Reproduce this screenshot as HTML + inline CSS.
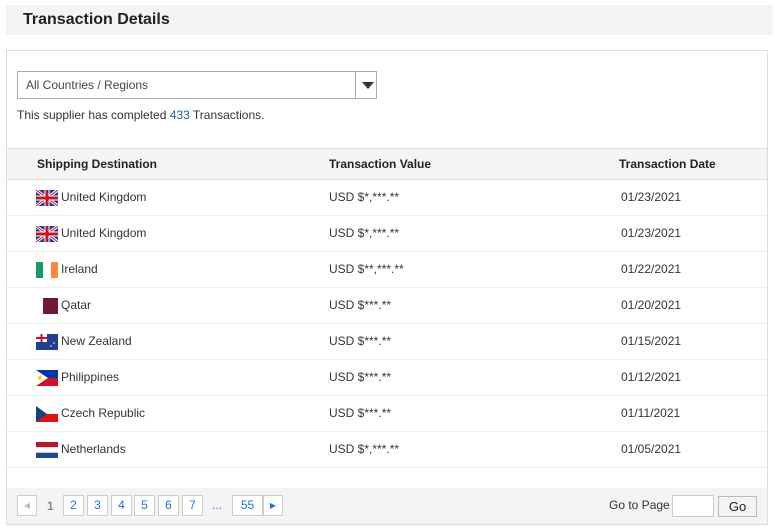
<!DOCTYPE html>
<html><head><style>
*{margin:0;padding:0;box-sizing:border-box}
body{width:774px;height:530px;background:#fff;font-family:"Liberation Sans",Arial,sans-serif;font-size:12px;color:#333;position:relative;overflow:hidden}
.a{position:absolute}
.hdr{left:6px;top:5px;width:767px;height:30px;background:#f4f4f4}
.hdr h1{position:absolute;left:17px;top:6px;font-size:16px;font-weight:bold;color:#222}
.panel{left:6px;top:50px;width:762px;height:475px;border:1px solid #ddd}
.sel{left:17px;top:71px;width:360px;height:28px;border:1px solid #aaa;background:#fff}
.sel span{position:absolute;left:8px;top:6px;color:#444}
.sel i{position:absolute;left:337px;top:0;width:1px;height:26px;background:#aaa}
.sel b{position:absolute;left:344px;top:10px;border-left:6px solid transparent;border-right:6px solid transparent;border-top:7px solid #333}
.th{left:7px;top:148px;width:760px;height:32px;background:#f5f5f5;border-top:1px solid #e0e0e0;border-bottom:1px solid #e0e0e0;font-weight:bold;color:#222}
.th span{position:absolute;top:8px}
.row{left:7px;width:760px;height:36px;border-bottom:1px solid #eee}
.row span{position:absolute;top:10px}
.flag{position:absolute;left:29px;top:10px;width:22px;height:16px}
.pg{left:7px;top:488px;width:760px;height:36px;background:#f4f4f4}
.btn{position:absolute;top:7px;height:21px;border:1px solid #ccc;background:#fff;color:#1a73e8;text-align:center;line-height:19px;font-size:12px}
</style></head><body>
<div class="a hdr"><h1>Transaction Details</h1></div>
<div class="a panel"></div>
<div class="a sel"><span>All Countries / Regions</span><i></i><b></b></div>
<div class="a" style="left:17px;top:108px">This supplier has completed <span style="color:#1a5fb4">433</span> Transactions.</div>
<div class="a th"><span style="left:30px">Shipping Destination</span><span style="left:322px">Transaction Value</span><span style="left:612px">Transaction Date</span></div>

<div class="a row" style="top:180px"><svg class="flag" viewBox="0 0 22 16"><rect width="22" height="16" fill="#1f3f8f"/><path d="M0 0L22 16M22 0L0 16" stroke="#fff" stroke-width="3"/><path d="M0 0L22 16M22 0L0 16" stroke="#c8102e" stroke-width="1"/><path d="M11 0V16M0 8H22" stroke="#fff" stroke-width="5"/><path d="M11 0V16M0 8H22" stroke="#c8102e" stroke-width="3"/></svg><span style="left:54px">United Kingdom</span><span style="left:322px">USD $*,***.**</span><span style="left:614px">01/23/2021</span></div>
<div class="a row" style="top:216px"><svg class="flag" viewBox="0 0 22 16"><rect width="22" height="16" fill="#1f3f8f"/><path d="M0 0L22 16M22 0L0 16" stroke="#fff" stroke-width="3"/><path d="M0 0L22 16M22 0L0 16" stroke="#c8102e" stroke-width="1"/><path d="M11 0V16M0 8H22" stroke="#fff" stroke-width="5"/><path d="M11 0V16M0 8H22" stroke="#c8102e" stroke-width="3"/></svg><span style="left:54px">United Kingdom</span><span style="left:322px">USD $*,***.**</span><span style="left:614px">01/23/2021</span></div>
<div class="a row" style="top:252px"><svg class="flag" viewBox="0 0 22 16"><rect width="7" height="16" fill="#169b62"/><rect x="7" width="8" height="16" fill="#fff"/><rect x="15" width="7" height="16" fill="#ff883e"/></svg><span style="left:54px">Ireland</span><span style="left:322px">USD $**,***.**</span><span style="left:614px">01/22/2021</span></div>
<div class="a row" style="top:288px"><svg class="flag" viewBox="0 0 22 16"><rect width="22" height="16" fill="#fff"/><rect x="7" width="15" height="16" fill="#6e1a3c"/></svg><span style="left:54px">Qatar</span><span style="left:322px">USD $***.**</span><span style="left:614px">01/20/2021</span></div>
<div class="a row" style="top:324px"><svg class="flag" viewBox="0 0 22 16"><rect width="22" height="16" fill="#1f3f8f"/><rect width="11" height="8" fill="#fff"/><path d="M5.5 0V8M0 4H11" stroke="#c8102e" stroke-width="2"/><circle cx="16" cy="5" r=".8" fill="#c8102e"/><circle cx="18" cy="9" r=".8" fill="#fff"/><circle cx="15" cy="12" r=".8" fill="#fff"/></svg><span style="left:54px">New Zealand</span><span style="left:322px">USD $***.**</span><span style="left:614px">01/15/2021</span></div>
<div class="a row" style="top:360px"><svg class="flag" viewBox="0 0 22 16"><rect width="22" height="8" fill="#0038a8"/><rect y="8" width="22" height="8" fill="#ce1126"/><path d="M0 0L12 8L0 16Z" fill="#fff"/><circle cx="4" cy="8" r="2" fill="#fcd116"/></svg><span style="left:54px">Philippines</span><span style="left:322px">USD $***.**</span><span style="left:614px">01/12/2021</span></div>
<div class="a row" style="top:396px"><svg class="flag" viewBox="0 0 22 16"><rect width="22" height="8" fill="#fff"/><rect y="8" width="22" height="8" fill="#d7141a"/><path d="M0 0L11 8L0 16Z" fill="#11457e"/></svg><span style="left:54px">Czech Republic</span><span style="left:322px">USD $***.**</span><span style="left:614px">01/11/2021</span></div>
<div class="a row" style="top:432px"><svg class="flag" viewBox="0 0 22 16"><rect width="22" height="5.3" fill="#ae1c28"/><rect y="5.3" width="22" height="5.4" fill="#fff"/><rect y="10.7" width="22" height="5.3" fill="#21468b"/></svg><span style="left:54px">Netherlands</span><span style="left:322px">USD $*,***.**</span><span style="left:614px">01/05/2021</span></div>

<div class="a pg">
<div class="btn" style="left:10px;width:20px;color:#bbb;font-size:8px">&#9664;</div>
<div style="position:absolute;left:40px;top:11px;color:#888;font-weight:bold">1</div>
<div class="btn" style="left:56px;width:21px">2</div>
<div class="btn" style="left:80px;width:21px">3</div>
<div class="btn" style="left:104px;width:21px">4</div>
<div class="btn" style="left:127px;width:21px">5</div>
<div class="btn" style="left:151px;width:21px">6</div>
<div class="btn" style="left:175px;width:21px">7</div>
<div style="position:absolute;left:205px;top:10px;color:#1a73e8">...</div>
<div class="btn" style="left:225px;width:31px">55</div>
<div class="btn" style="left:256px;width:20px;font-size:8px">&#9654;</div>
<div style="position:absolute;left:602px;top:10px;color:#333">Go to Page</div>
<div style="position:absolute;left:665px;top:7px;width:42px;height:22px;border:1px solid #ccc;background:#fff"></div>
<div style="position:absolute;left:711px;top:8px;width:39px;height:21px;border:1px solid #bbb;background:#f3f3f3;text-align:center;line-height:19px;font-size:13px;color:#222">Go</div>
</div>
</body></html>
